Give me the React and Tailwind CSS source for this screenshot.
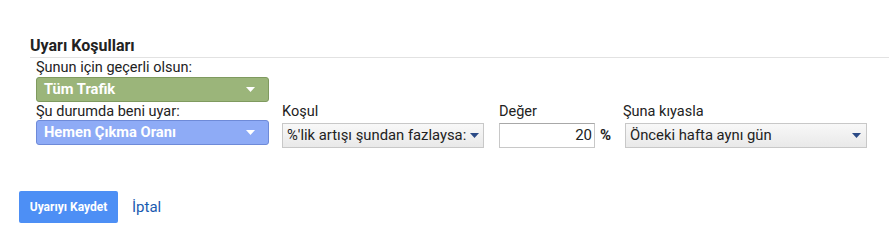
import React from "react";

const Arrow = ({ className }) => (
  <svg width="9" height="5" viewBox="0 0 9 5" className={`shrink-0 ${className}`}>
    <path d="M0 0h9L4.5 5z" fill="currentColor" />
  </svg>
);

const ColorSelect = ({ label, bg }) => (
  <div
    className={`w-[233px] h-[25px] rounded-[3px] border flex items-center justify-between pl-[7px] pr-[13px] text-white font-bold text-[14.7px] whitespace-nowrap ${bg}`}
  >
    <span>{label}</span>
    <Arrow className="text-white" />
  </div>
);

const GraySelect = ({ label, width }) => (
  <div
    className={`h-[25px] ${width} border border-[#c8c8c8] bg-gradient-to-b from-[#f8f8f8] to-[#e9e9e9] flex items-center justify-between gap-[4px] pl-[4px] pr-[5px] text-[14.8px] text-[#222] whitespace-nowrap`}
  >
    <span>{label}</span>
    <Arrow className="text-[#2b4a86]" />
  </div>
);

export default function App() {
  return (
    <div className="w-[889px] h-[240px] bg-white text-[#222] pt-[36px] font-['Roboto',Arial,sans-serif]">
      <div className="pl-[30px]">
        <div className="text-[16px] font-bold leading-[20px] pb-[1px] border-b border-[#e2e2e2] text-[#222]">
          Uyarı Koşulları
        </div>
        <div className="pl-[6px] text-[14.5px] whitespace-nowrap">
          <div className="leading-[19px]">Şunun için geçerli olsun:</div>
          <ColorSelect label="Tüm Trafik" bg="bg-[#9bb57a] border-[#7f9a5f]" />
          <div className="flex mt-[1px]">
            <div className="w-[246px]">
              <div className="leading-[17px]">Şu durumda beni uyar:</div>
              <ColorSelect label="Hemen Çıkma Oranı" bg="bg-[#8eabf6] border-[#6e8ad8]" />
            </div>
            <div className="w-[217px]">
              <div className="leading-[17px]">Koşul</div>
              <div className="mt-[3px]">
                <GraySelect label="%'lik artışı şundan fazlaysa:" width="w-[202px]" />
              </div>
            </div>
            <div className="w-[124px]">
              <div className="leading-[17px]">Değer</div>
              <div className="mt-[3px] flex items-center">
                <div className="w-[96px] h-[25px] border border-[#c8c8c8] border-t-[#a8a8a8] flex items-center justify-end pr-[2px] text-[15px]">
                  20
                </div>
                <span className="ml-[5px] font-bold text-[15px]">%</span>
              </div>
            </div>
            <div>
              <div className="leading-[17px]">Şuna kıyasla</div>
              <div className="mt-[3px] ml-[2px]">
                <GraySelect label="Önceki hafta aynı gün" width="w-[242px]" />
              </div>
            </div>
          </div>
        </div>
      </div>
      <div className="flex items-center pl-[19px] mt-[43px]">
        <button className="h-[32px] w-[99px] rounded-[2px] bg-[#4d8ff5] text-white text-[12px] font-bold">
          Uyarıyı Kaydet
        </button>
        <span className="ml-[14px] text-[15px] text-[#1a5bb0]">İptal</span>
      </div>
    </div>
  );
}
